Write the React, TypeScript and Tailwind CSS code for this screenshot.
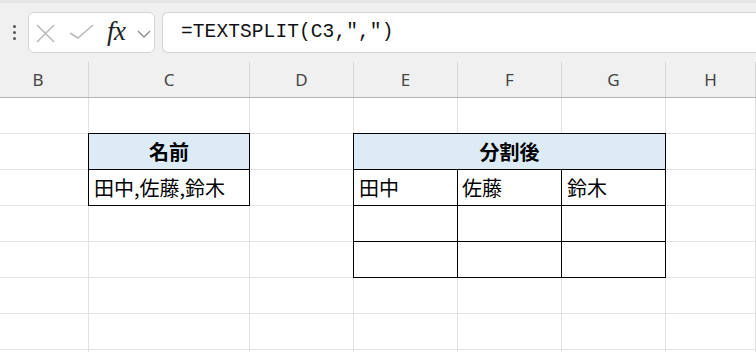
import React from "react";

const cols = ["B", "C", "D", "E", "F", "G", "H"];

const FormulaBar = () => {
  return (
    <div className="h-[62px] bg-[#f0f0f0] border-t-[3px] border-[#e6e6e6] flex items-center">
      <div className="w-[28px] flex flex-col items-center gap-[3px] pl-[1px]">
        <span className="w-[3px] h-[3px] rounded-full bg-[#555]" />
        <span className="w-[3px] h-[3px] rounded-full bg-[#555]" />
        <span className="w-[3px] h-[3px] rounded-full bg-[#555]" />
      </div>
      <div className="w-[127px] h-[41px] bg-white border border-[#d4d4d4] rounded-[6px] flex items-center">
        <svg width="126" height="41" viewBox="0 0 126 41">
          <path d="M8 13 L25 30 M25 13 L8 30" stroke="#b8b8b8" strokeWidth="1.5" fill="none" />
          <path d="M41 21 L49 26 L64 13" stroke="#b8b8b8" strokeWidth="1.5" fill="none" />
          <path d="M109 19 L115 25 L121 19" stroke="#8a8a8a" strokeWidth="1.3" fill="none" />
        </svg>
        <span className="-ml-[48px] mt-[-3px] italic text-[27px] text-[#222] leading-none tracking-[-0.5px] [font-family:'Liberation_Serif',serif]">
          fx
        </span>
      </div>
      <div className="ml-[7px] flex-1 h-[41px] bg-white border border-r-0 border-[#d4d4d4] rounded-l-[6px] flex items-center pl-[18px]">
        <span className="text-[19.5px] text-[#111] tracking-[0.1px] [font-family:'Liberation_Mono',monospace]">
          =TEXTSPLIT(C3,",")
        </span>
      </div>
    </div>
  );
};

const ColumnHeader = () => {
  return (
    <div className="grid grid-cols-[89px_161px_104px_104px_104px_104px_1fr] h-[36px] bg-[#f0f0f0] border-b border-[#b3b3b3]">
      {cols.map((c, i) => (
        <div
          key={c}
          className={`flex items-center justify-center text-[17px] text-[#444] border-r border-[#d6d6d6] [font-family:'Noto_Sans',sans-serif] ${i === 0 ? "pr-[12px]" : ""}`}
        >
          {c}
        </div>
      ))}
    </div>
  );
};

const cjk = "[font-family:'Noto_Sans_CJK_JP',sans-serif]";

const Sheet = () => {
  const cells = Array.from({ length: 8 * 7 }, (_, i) => i);
  return (
    <div className="grid">
      {/* gridlines */}
      <div className="col-start-1 row-start-1 grid grid-cols-[89px_161px_104px_104px_104px_104px_1fr] grid-rows-[repeat(8,36px)]">
        {cells.map((i) => (
          <div key={i} className="border-r border-b border-[#e1e1e1]" />
        ))}
      </div>
      {/* tables */}
      <div className={`col-start-1 row-start-1 grid grid-cols-[89px_161px_104px_104px_104px_104px_1fr] grid-rows-[repeat(8,36px)] text-black ${cjk}`}>
        <div className="col-start-2 row-start-2 -ml-px -mt-px border border-black bg-[#ddebf7] flex items-center justify-center font-bold text-[20px]">
          名前
        </div>
        <div className="col-start-2 row-start-3 -ml-px -mt-px border border-black bg-white flex items-center pl-[5px] text-[20px]">
          田中,佐藤,鈴木
        </div>

        <div className="col-start-4 col-span-3 row-start-2 -ml-px -mt-px border border-black bg-[#ddebf7] flex items-center justify-center font-bold text-[20px]">
          分割後
        </div>
        <div className="col-start-4 row-start-3 -ml-px -mt-px border border-black bg-white flex items-center pl-[5px] text-[20px]">田中</div>
        <div className="col-start-5 row-start-3 -ml-px -mt-px border border-black bg-white flex items-center pl-[4px] text-[20px]">佐藤</div>
        <div className="col-start-6 row-start-3 -ml-px -mt-px border border-black bg-white flex items-center pl-[5px] text-[20px]">鈴木</div>
        <div className="col-start-4 row-start-4 -ml-px -mt-px border border-black bg-white" />
        <div className="col-start-5 row-start-4 -ml-px -mt-px border border-black bg-white" />
        <div className="col-start-6 row-start-4 -ml-px -mt-px border border-black bg-white" />
        <div className="col-start-4 row-start-5 -ml-px -mt-px border border-black bg-white" />
        <div className="col-start-5 row-start-5 -ml-px -mt-px border border-black bg-white" />
        <div className="col-start-6 row-start-5 -ml-px -mt-px border border-black bg-white" />
      </div>
    </div>
  );
};

export default function App() {
  return (
    <div className="w-[756px] h-[352px] overflow-hidden bg-white">
      <FormulaBar />
      <ColumnHeader />
      <Sheet />
    </div>
  );
}
